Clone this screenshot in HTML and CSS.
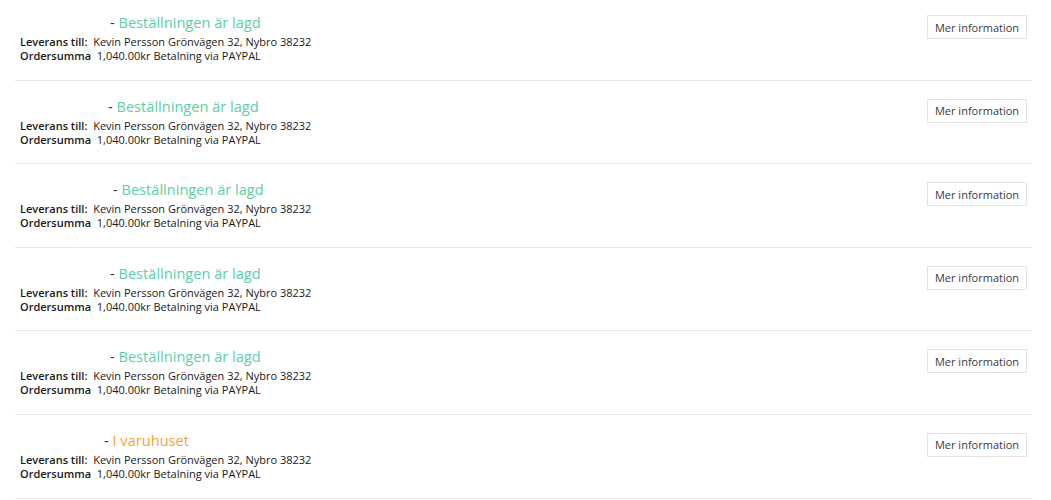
FILE: index.html
```html
<!DOCTYPE html>
<html lang="sv">
<head>
    <meta charset="UTF-8">
    <meta name="viewport" content="width=device-width, initial-scale=1.0">
    <title>Mina ordrar</title>
    <link rel="stylesheet" href="styles.css">
</head>
<body>

<div class="orders">
    <div class="order">
        <div class="order-info">
            <div class="order-title"><span class="order-no w90"></span>- <span class="status placed">Beställningen är lagd</span></div>
            <div class="order-line"><span class="label">Leverans till:</span>&nbsp; Kevin Persson Grönvägen 32, Nybro 38232</div>
            <div class="order-line"><span class="label">Ordersumma</span>&nbsp; 1,040.00kr Betalning via PAYPAL</div>
        </div>
        <button class="more-btn">Mer information</button>
    </div>
    <div class="order">
        <div class="order-info">
            <div class="order-title"><span class="order-no w88"></span>- <span class="status placed">Beställningen är lagd</span></div>
            <div class="order-line"><span class="label">Leverans till:</span>&nbsp; Kevin Persson Grönvägen 32, Nybro 38232</div>
            <div class="order-line"><span class="label">Ordersumma</span>&nbsp; 1,040.00kr Betalning via PAYPAL</div>
        </div>
        <button class="more-btn">Mer information</button>
    </div>
    <div class="order">
        <div class="order-info">
            <div class="order-title"><span class="order-no w93"></span>- <span class="status placed">Beställningen är lagd</span></div>
            <div class="order-line"><span class="label">Leverans till:</span>&nbsp; Kevin Persson Grönvägen 32, Nybro 38232</div>
            <div class="order-line"><span class="label">Ordersumma</span>&nbsp; 1,040.00kr Betalning via PAYPAL</div>
        </div>
        <button class="more-btn">Mer information</button>
    </div>
    <div class="order">
        <div class="order-info">
            <div class="order-title"><span class="order-no w90"></span>- <span class="status placed">Beställningen är lagd</span></div>
            <div class="order-line"><span class="label">Leverans till:</span>&nbsp; Kevin Persson Grönvägen 32, Nybro 38232</div>
            <div class="order-line"><span class="label">Ordersumma</span>&nbsp; 1,040.00kr Betalning via PAYPAL</div>
        </div>
        <button class="more-btn">Mer information</button>
    </div>
    <div class="order">
        <div class="order-info">
            <div class="order-title"><span class="order-no w90"></span>- <span class="status placed">Beställningen är lagd</span></div>
            <div class="order-line"><span class="label">Leverans till:</span>&nbsp; Kevin Persson Grönvägen 32, Nybro 38232</div>
            <div class="order-line"><span class="label">Ordersumma</span>&nbsp; 1,040.00kr Betalning via PAYPAL</div>
        </div>
        <button class="more-btn">Mer information</button>
    </div>
    <div class="order">
        <div class="order-info">
            <div class="order-title"><span class="order-no w84"></span>- <span class="status stock">I varuhuset</span></div>
            <div class="order-line"><span class="label">Leverans till:</span>&nbsp; Kevin Persson Grönvägen 32, Nybro 38232</div>
            <div class="order-line"><span class="label">Ordersumma</span>&nbsp; 1,040.00kr Betalning via PAYPAL</div>
        </div>
        <button class="more-btn">Mer information</button>
    </div>
</div>

</body>
</html>
```

FILE: styles.css
```css
body {
    margin: 0;
    font-family: 'Open Sans', 'Liberation Sans', sans-serif;
    color: #1a1a1a;
    background: #fff;
}
.orders {
    margin: 0 19px 0 15px;
}
.order {
    display: flex;
    justify-content: space-between;
    align-items: flex-start;
    padding: 17px 5px 16.6px 5px;
    border-bottom: 1px solid #e6e6e6;
}
.order:first-child {
    padding-top: 14px;
}
.order-title {
    font-size: 14.6px;
    line-height: 17px;
    margin-bottom: 4px;
    color: #333;
}
.order-no {
    display: inline-block;
    height: 10px;
}
.w84 { width: 84px; }
.w88 { width: 88px; }
.w90 { width: 90px; }
.w93 { width: 93px; }
.status.placed {
    color: #5ccfa6;
}
.status.stock {
    color: #f5a23a;
}
.order-line {
    font-size: 11px;
    line-height: 14px;
    font-weight: 500;
}
.label {
    font-weight: 600;
}
.more-btn {
    margin-top: 1px;
    width: 100px;
    height: 24px;
    padding: 0;
    font-family: inherit;
    font-size: 11px;
    font-weight: 500;
    color: #3a3a3a;
    background: #fff;
    border: 1px solid #e3e3e3;
    cursor: pointer;
}
```
